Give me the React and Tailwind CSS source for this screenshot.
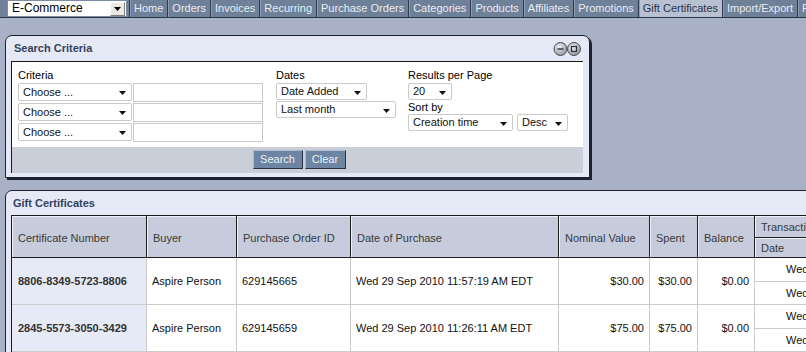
import React from 'react';

const tabs = ['Home', 'Orders', 'Invoices', 'Recurring', 'Purchase Orders', 'Categories', 'Products', 'Affiliates', 'Promotions', 'Gift Certificates', 'Import/Export', 'P'];

const Arrow = () => (
    <svg width="7" height="4" viewBox="0 0 7 4" className="mt-[2px] shrink-0">
        <path d="M0 0h7L3.5 4z" fill="#111" />
    </svg>
);

const Select = ({ className, children }) => (
    <div className={`flex items-center justify-between bg-white border border-[#c9c9c9] rounded-[2px] pl-[4px] pr-[5px] text-[#111] ${className}`}>
        <span>{children}</span>
        <Arrow />
    </div>
);

const WinButtons = () => (
    <svg width="29" height="16" viewBox="0 0 29 16">
        <defs>
            <radialGradient id="wb" cx="40%" cy="35%" r="70%">
                <stop offset="0" stopColor="#eef0f3" />
                <stop offset="1" stopColor="#8b9099" />
            </radialGradient>
        </defs>
        <circle cx="7.5" cy="8" r="6.5" fill="url(#wb)" stroke="#4a4f58" />
        <path d="M4.5 8h6" stroke="#2c2f35" strokeWidth="1.4" />
        <circle cx="21" cy="8" r="6.5" fill="url(#wb)" stroke="#4a4f58" />
        <rect x="18.5" y="5.5" width="5" height="5" fill="none" stroke="#2c2f35" strokeWidth="1.2" />
    </svg>
);

const HeadCell = ({ className = '', children }) => (
    <div className={`flex items-center px-[6px] bg-[#c6ccdc] text-[#3a3a3a] border-r border-b border-[#1f1f1f] shadow-[inset_1px_1px_0_#eef1f8] ${className}`}>
        {children}
    </div>
);

const rows = [
    { num: '8806-8349-5723-8806', buyer: 'Aspire Person', po: '629145665', date: 'Wed 29 Sep 2010 11:57:19 AM EDT', value: '$30.00', spent: '$30.00', balance: '$0.00' },
    { num: '2845-5573-3050-3429', buyer: 'Aspire Person', po: '629145659', date: 'Wed 29 Sep 2010 11:26:11 AM EDT', value: '$75.00', spent: '$75.00', balance: '$0.00' },
];

export default function App() {
    return (
        <div className="w-[806px] h-[352px] overflow-hidden bg-[#a9b1c6] font-['Liberation_Sans',Arial,sans-serif] text-[11px] leading-[13px]">

            {/* Top navigation */}
            <div className="flex h-[18px] bg-[#6f8099] border-b border-[#28334a] whitespace-nowrap">
                <div className="pl-[7px] pr-[2px] h-full">
                    <div className="w-[120px] h-full bg-white border border-[#7f8ba0] flex items-center justify-between pl-[4px] pr-[1px] text-black text-[12px]">
                        <span>E-Commerce</span>
                        <div className="w-[15px] h-[14px] bg-[#ece9e3] border border-t-white border-l-white border-r-[#808080] border-b-[#808080] flex items-center justify-center">
                            <svg width="7" height="4" viewBox="0 0 7 4"><path d="M0 0h7L3.5 4z" fill="#000" /></svg>
                        </div>
                    </div>
                </div>
                {tabs.map((t) => (
                    <div
                        key={t}
                        className={`flex items-center px-[4px] border-l border-[#2e3a4f] shadow-[inset_1px_0_0_#8e9cb2] ${t === 'Gift Certificates' ? 'bg-[#b8c1d1] text-[#2b3446]' : 'text-[#e9edf4]'}`}
                    >
                        {t}
                    </div>
                ))}
            </div>

            {/* Search Criteria */}
            <div className="ml-[5px] mt-[17px] w-[585px] h-[143px] rounded-t-[7px] border border-[#1c2030] bg-[#e5e9f5] shadow-[2px_2px_0_#1c2030]">
                <div className="h-[25px] flex items-center justify-between pl-[8px] pr-[7px]">
                    <span className="font-bold text-[#34425e]">Search Criteria</span>
                    <WinButtons />
                </div>
                <div className="ml-[5px] mr-[6px] border-t border-l border-[#1a1a1a] bg-white">
                    <div className="h-[85px] flex pl-[6px] pt-[7px]">
                        {/* Criteria */}
                        <div className="w-[258px]">
                            <div className="h-[13px]">Criteria</div>
                            {[0, 1, 2].map((i) => (
                                <div key={i} className="h-[20px] flex items-center gap-[1px]">
                                    <Select className="w-[114px] h-[18px]">Choose ...</Select>
                                    <div className="w-[130px] h-[19px] border border-[#c9c9c9] bg-white" />
                                </div>
                            ))}
                        </div>
                        {/* Dates */}
                        <div className="w-[132px]">
                            <div className="h-[13px]">Dates</div>
                            <div className="flex flex-col gap-[1px] pt-[1px]">
                                <Select className="w-[91px] h-[17px]">Date Added</Select>
                                <Select className="w-[120px] h-[17px]">Last month</Select>
                            </div>
                        </div>
                        {/* Results */}
                        <div>
                            <div className="h-[13px]">Results per Page</div>
                            <div className="pt-[1px]">
                                <Select className="w-[44px] h-[17px]">20</Select>
                            </div>
                            <div className="h-[14px] pt-[1px]">Sort by</div>
                            <div className="flex gap-[4px]">
                                <Select className="w-[105px] h-[17px]">Creation time</Select>
                                <Select className="w-[51px] h-[17px]">Desc</Select>
                            </div>
                        </div>
                    </div>
                    <div className="h-[26px] bg-[#c9ced9] flex items-start justify-center pt-[3px] pl-[3px] gap-[2px]">
                        <button className="w-[50px] h-[19px] bg-[#6d84a2] text-[#eef2f8] border border-t-[#aab8cc] border-l-[#aab8cc] border-r-[#2a3140] border-b-[#2a3140]">Search</button>
                        <button className="w-[41px] h-[19px] bg-[#6d84a2] text-[#eef2f8] border border-t-[#aab8cc] border-l-[#aab8cc] border-r-[#2a3140] border-b-[#2a3140]">Clear</button>
                    </div>
                </div>
            </div>

            {/* Gift Certificates */}
            <div className="ml-[5px] mt-[12px] w-[1000px] rounded-tl-[7px] border border-[#1c2030] bg-[#e5e9f5]">
                <div className="h-[24px] flex items-center pl-[7px] pt-[1px]">
                    <span className="font-bold text-[#34425e]">Gift Certificates</span>
                </div>
                <div className="ml-[5px] border-t border-l border-[#1a1a1a] bg-white">
                    <div className="grid grid-cols-[135px_90px_114px_208px_91px_48px_57px_300px]">
                        {/* header */}
                        <HeadCell className="h-[42px] pt-[3px]">Certificate Number</HeadCell>
                        <HeadCell className="h-[42px] pt-[3px]">Buyer</HeadCell>
                        <HeadCell className="h-[42px] pt-[3px]">Purchase Order ID</HeadCell>
                        <HeadCell className="h-[42px] pt-[3px]">Date of Purchase</HeadCell>
                        <HeadCell className="h-[42px] pt-[3px] px-[5px]">Nominal Value</HeadCell>
                        <HeadCell className="h-[42px] pt-[3px]">Spent</HeadCell>
                        <HeadCell className="h-[42px] pt-[3px] px-[5px]">Balance</HeadCell>
                        <div className="flex flex-col h-[42px]">
                            <HeadCell className="h-[22px] pt-[1px] px-[5px]">Transactions</HeadCell>
                            <HeadCell className="h-[20px] pt-[1px] px-[5px] w-[200px]">Date</HeadCell>
                        </div>

                        {/* rows */}
                        {rows.map((r) => (
                            <React.Fragment key={r.num}>
                                <div className="h-[47px] flex items-center px-[6px] bg-[#e6eaf6] font-bold text-[#333] border-r border-b border-[#cbcbcb]">{r.num}</div>
                                <div className="h-[47px] flex items-center px-[5px] text-[#111] border-r border-b border-[#cbcbcb]">{r.buyer}</div>
                                <div className="h-[47px] flex items-center px-[5px] text-[#111] border-r border-b border-[#cbcbcb]">{r.po}</div>
                                <div className="h-[47px] flex items-center px-[5px] text-[#111] border-r border-b border-[#cbcbcb]">{r.date}</div>
                                <div className="h-[47px] flex items-center justify-end px-[5px] text-[#111] border-r border-b border-[#cbcbcb]">{r.value}</div>
                                <div className="h-[47px] flex items-center justify-end px-[5px] text-[#111] border-r border-b border-[#cbcbcb]">{r.spent}</div>
                                <div className="h-[47px] flex items-center justify-end px-[5px] text-[#111] border-r border-b border-[#cbcbcb]">{r.balance}</div>
                                <div className="h-[47px] flex flex-col">
                                    <div className="h-[24px] flex items-center pl-[31px] text-[#111] border-b border-[#cbcbcb] whitespace-nowrap">{r.date}</div>
                                    <div className="h-[23px] flex items-center pl-[31px] text-[#111] border-b border-[#cbcbcb] whitespace-nowrap">{r.date}</div>
                                </div>
                            </React.Fragment>
                        ))}
                    </div>
                </div>
            </div>
        </div>
    );
}
